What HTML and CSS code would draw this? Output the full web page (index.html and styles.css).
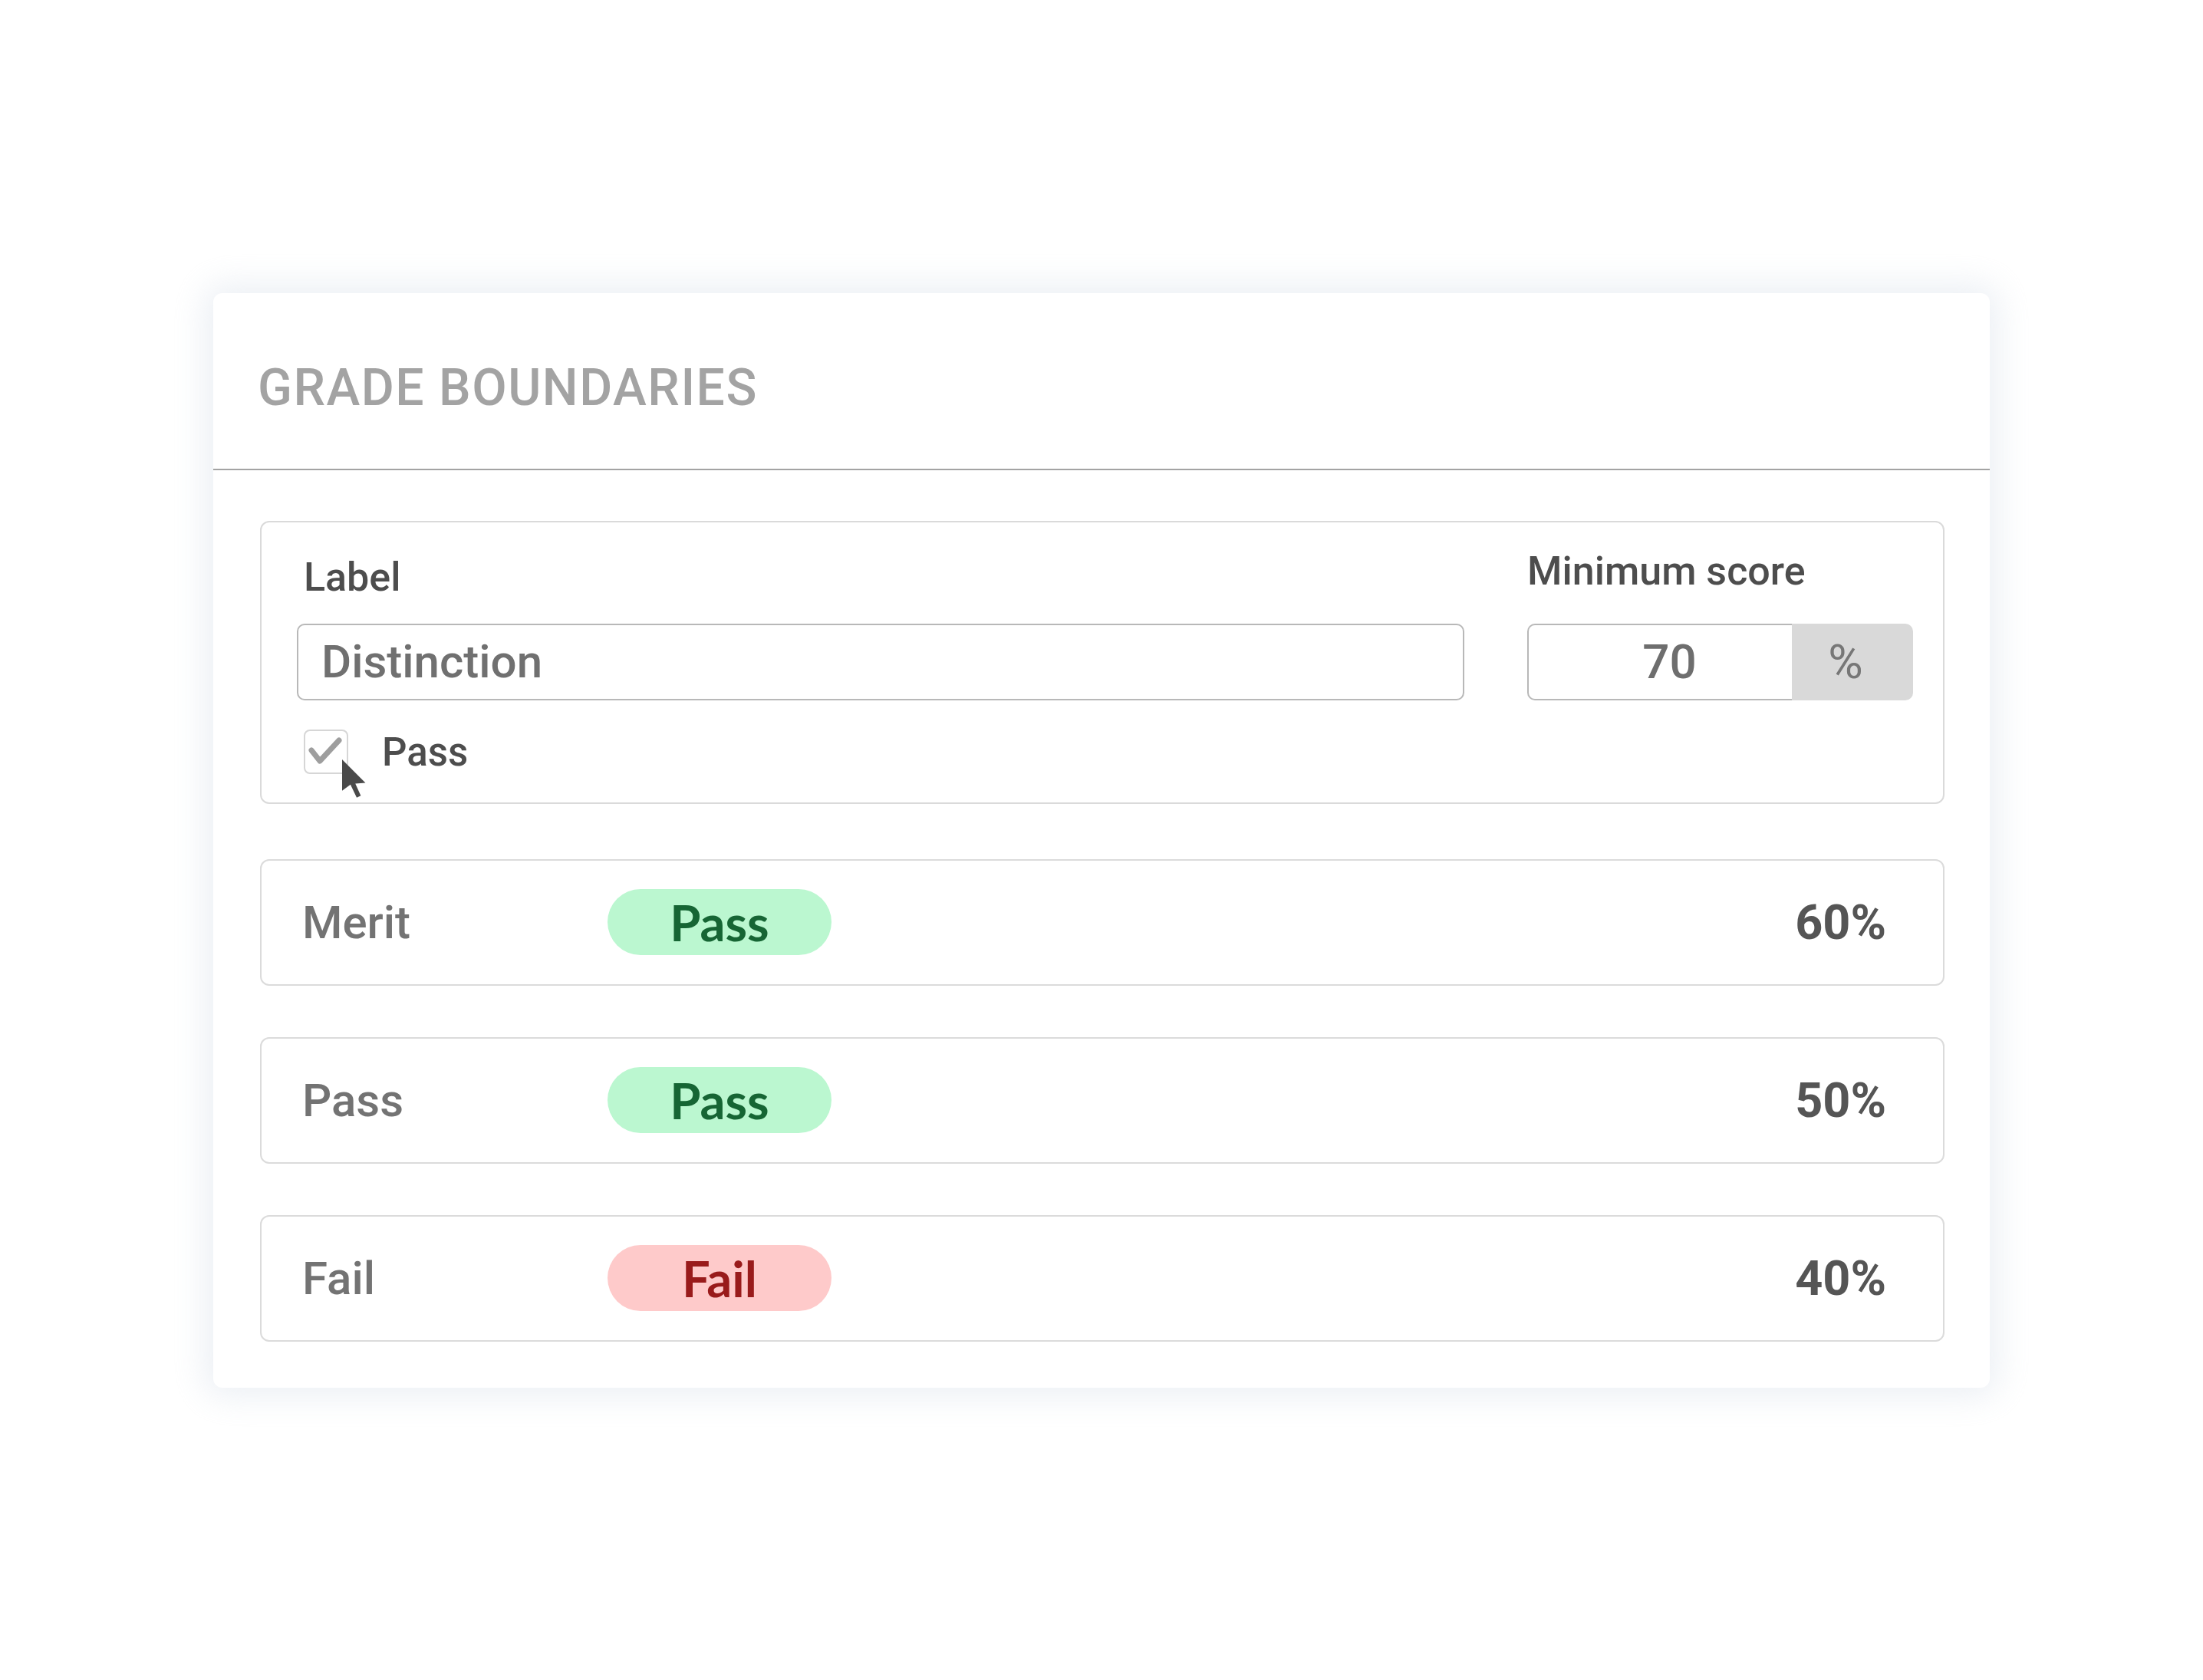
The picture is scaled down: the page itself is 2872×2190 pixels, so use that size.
FILE: index.html
```html
<!DOCTYPE html>
<html lang="en">
<head>
    <meta charset="UTF-8">
    <meta name="viewport" content="width=device-width, initial-scale=1.0">
    <title>Grade Boundaries</title>
    <link rel="stylesheet" href="styles.css">
</head>
<body>
    <div class="card">
        <div class="card-header">
            <h2>GRADE BOUNDARIES</h2>
        </div>
        <div class="card-body">
            <div class="edit-box">
                <label class="field-label label-name" for="grade-label">Label</label>
                <label class="field-label" for="grade-min">Minimum score</label>
                <input id="grade-label" class="text-input" type="text" value="Distinction">
                <div class="score-input">
                    <input id="grade-min" type="text" value="70">
                    <span class="addon">%</span>
                </div>
                <label class="check">
                    <span class="checkbox">
                        <svg class="tick" viewBox="0 0 54 54" width="54" height="54">
                            <polyline points="8,25 19,39 44,12" fill="none" stroke="#9e9e9e" stroke-width="7" stroke-linecap="round" stroke-linejoin="round"/>
                        </svg>
                        <svg class="cursor" viewBox="0 0 13 20" width="33" height="51">
                            <path d="M0 0 L0 16 L4.3 12.9 L7.5 19.6 L9.6 18.6 L6.8 12.4 L12 12 Z" fill="#4a4a4a"/>
                        </svg>
                    </span>
                    Pass
                </label>
            </div>

            <div class="grade-list">
                <div class="grade-row">
                    <span class="grade-name">Merit</span>
                    <span class="badge pass">Pass</span>
                    <span class="grade-score">60%</span>
                </div>
                <div class="grade-row">
                    <span class="grade-name">Pass</span>
                    <span class="badge pass">Pass</span>
                    <span class="grade-score">50%</span>
                </div>
                <div class="grade-row">
                    <span class="grade-name">Fail</span>
                    <span class="badge fail">Fail</span>
                    <span class="grade-score">40%</span>
                </div>
            </div>
        </div>
    </div>
</body>
</html>
```

FILE: styles.css
```css
body {
    margin: 0;
    min-height: 100vh;
    display: flex;
    align-items: center;
    justify-content: center;
    background: #fff;
    font-family: Roboto, "Noto Sans", sans-serif;
}
.card {
    width: 2316px;
    background: #fff;
    border-radius: 12px;
    box-shadow: 0 0 44px 10px rgba(222, 228, 237, 0.6);
}
.card-header {
    padding: 85px 58px 67px;
    border-bottom: 2px solid #a3a3a3;
}
.card-header h2 {
    margin: 0;
    font-size: 66px;
    line-height: 77px;
    font-weight: 500;
    letter-spacing: 1.5px;
    color: #a3a3a3;
}
.card-body {
    padding: 66px 59px 60px 61px;
}
.edit-box {
    display: grid;
    grid-template-columns: 1522px minmax(0, 1fr);
    column-gap: 82px;
    padding: 33px 39px 36px 46px;
    border: 2px solid #dadada;
    border-radius: 12px;
}
.field-label {
    align-self: start;
    font-size: 52px;
    line-height: 61px;
    font-weight: 500;
    color: #4d4d4d;
}
.label-name {
    padding: 8px 0 0 9px;
    margin-bottom: 30px;
}
.text-input {
    box-sizing: border-box;
    width: 100%;
    height: 100px;
    padding: 0 30px;
    border: 2px solid #b8b8b8;
    border-radius: 10px;
    font-family: Roboto, sans-serif;
    font-size: 60px;
    font-weight: 500;
    color: #707070;
    outline: none;
}
.score-input {
    display: flex;
    height: 100px;
}
.score-input input {
    flex: 1;
    width: 0;
    min-width: 0;
    box-sizing: border-box;
    height: 100px;
    padding: 0 0 0 24px;
    border: 2px solid #b8b8b8;
    border-right: none;
    border-radius: 10px 0 0 10px;
    text-align: center;
    font-family: Roboto, sans-serif;
    font-size: 62px;
    font-weight: 500;
    color: #6e6e6e;
    outline: none;
}
.addon {
    width: 158px;
    flex: none;
    box-sizing: border-box;
    display: flex;
    align-items: center;
    justify-content: center;
    padding-right: 18px;
    background: #d9d9d9;
    border-radius: 0 10px 10px 0;
    font-size: 62px;
    color: #777;
}
.check {
    grid-column: 1 / -1;
    display: flex;
    align-items: center;
    gap: 44px;
    margin-top: 38px;
    padding-left: 9px;
    font-size: 51px;
    font-weight: 500;
    color: #4d4d4d;
}
.checkbox {
    position: relative;
    width: 58px;
    height: 58px;
    box-sizing: border-box;
    border: 2px solid #d6d6d6;
    border-radius: 8px;
}
.tick {
    display: block;
}
.cursor {
    position: absolute;
    left: 48px;
    top: 37px;
}
.grade-list {
    display: flex;
    flex-direction: column;
    gap: 67px;
    margin-top: 72px;
}
.grade-row {
    display: grid;
    grid-template-columns: 398px 292px 1fr;
    align-items: center;
    height: 165px;
    box-sizing: border-box;
    padding: 0 74px 0 53px;
    border: 2px solid #dbdbdb;
    border-radius: 12px;
}
.grade-name {
    font-size: 60px;
    font-weight: 500;
    color: #737373;
}
.badge {
    height: 86px;
    line-height: 86px;
    border-radius: 43px;
    text-align: center;
    font-family: Lato, sans-serif;
    font-size: 65px;
    font-weight: 700;
}
.badge.pass {
    background: #bbf7d0;
    color: #166534;
}
.badge.fail {
    background: #fecaca;
    color: #991b1b;
}
.grade-score {
    text-align: right;
    font-size: 63px;
    font-weight: 700;
    color: #555;
}
```
